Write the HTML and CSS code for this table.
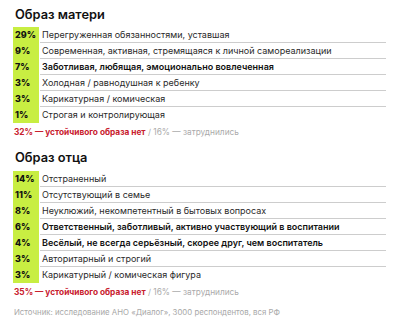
FILE: index.html
```html
<!DOCTYPE html>
<html lang="ru">
<head>
<meta charset="utf-8">
<link rel="stylesheet" href="styles.css">
</head>
<body>
<div class="page">
  <h2 class="title">Образ матери</h2>
  <div class="table">
    <div class="row"><span class="pct">29%</span><span class="label">Перегруженная обязанностями, уставшая</span></div>
    <div class="row"><span class="pct">9%</span><span class="label">Современная, активная, стремящаяся к личной самореализации</span></div>
    <div class="row"><span class="pct">7%</span><span class="label bold">Заботливая, любящая, эмоционально вовлеченная</span></div>
    <div class="row"><span class="pct">3%</span><span class="label">Холодная / равнодушная к ребенку</span></div>
    <div class="row"><span class="pct">3%</span><span class="label">Карикатурная / комическая</span></div>
    <div class="row"><span class="pct">1%</span><span class="label">Строгая и контролирующая</span></div>
  </div>
  <p class="note"><span class="red">32% — устойчивого образа нет</span> / 16% — затруднились</p>

  <h2 class="title second">Образ отца</h2>
  <div class="table">
    <div class="row"><span class="pct">14%</span><span class="label">Отстраненный</span></div>
    <div class="row"><span class="pct">11%</span><span class="label">Отсутствующий в семье</span></div>
    <div class="row"><span class="pct">8%</span><span class="label">Неуклюжий, некомпетентный в бытовых вопросах</span></div>
    <div class="row"><span class="pct">6%</span><span class="label bold">Ответственный, заботливый, активно участвующий в воспитании</span></div>
    <div class="row"><span class="pct">4%</span><span class="label bold">Весёлый, не всегда серьёзный, скорее друг, чем воспитатель</span></div>
    <div class="row"><span class="pct">3%</span><span class="label">Авторитарный и строгий</span></div>
    <div class="row"><span class="pct">3%</span><span class="label">Карикатурный / комическая фигура</span></div>
  </div>
  <p class="note"><span class="red">35% — устойчивого образа нет</span> / 16% — затруднились</p>

  <p class="source">Источник: исследование АНО «Диалог», 3000 респондентов, вся РФ</p>
</div>
</body>
</html>
```

FILE: styles.css
```css
* { box-sizing: border-box; }
html, body { margin: 0; padding: 0; background: #ffffff; }
body {
  font-family: "Inter", "Noto Sans", sans-serif;
  color: #1a1a1a;
  width: 400px;
  height: 327px;
  overflow: hidden;
}
.page {
  padding: 6px 14px 0 13px;
}
.title {
  margin: 0 0 0 2px;
  height: 21px;
  font-size: 12.8px;
  line-height: 18px;
  font-weight: 600;
  color: #111;
}
.title.second {
  margin-top: 9px;
  height: 22px;
}
.table {
  display: flex;
  flex-direction: column;
  width: 373px;
}
.row {
  display: flex;
  height: 16px;
  align-items: stretch;
}
.pct {
  width: 26px;
  flex: none;
  background: #c8ee42;
  font-size: 9px;
  font-weight: 800;
  line-height: 16px;
  padding-left: 2px;
  color: #111;
}
.label {
  flex: 1;
  margin-left: 1px;
  padding-left: 2px;
  font-size: 9px;
  line-height: 15px;
  color: #2a2a2a;
  border-bottom: 1.5px solid #cdcdcd;
  white-space: nowrap;
}
.row:last-child .label { border-bottom: none; }
.label.bold { font-weight: 600; color: #111; }
.note {
  margin: 2px 0 0 1px;
  height: 15px;
  font-size: 8.3px;
  line-height: 15px;
  color: #aaaaaa;
}
.red { color: #c8202e; font-weight: 700; }
.source {
  margin: 5px 0 0 1px;
  font-size: 7.8px;
  line-height: 14px;
  color: #a8a8a8;
}
```
